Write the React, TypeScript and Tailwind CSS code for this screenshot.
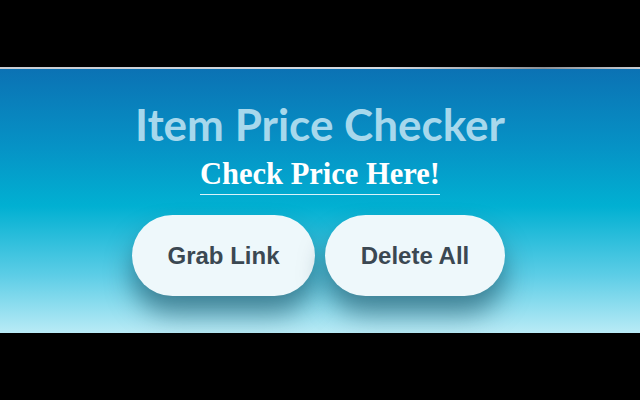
export default function App(): React.JSX.Element {
  return (
    <main className="flex h-[400px] w-[640px] flex-col bg-black">
      <div className="h-[67px] bg-black" />
      <div className="h-[2px] bg-[linear-gradient(90deg,#c9ccd2_0%,#d6dae0_60%,#8c9096_85%,#c9ccd2_100%)]" />
      <section className="flex h-[264px] flex-col items-center bg-[linear-gradient(180deg,#0b72b4_0%,#0693c6_30%,#01b0d2_52%,#5ccde6_78%,#b9ebf6_100%)] pt-[31px]">
        <h1 className="font-['Lato',sans-serif] text-[44px] font-bold leading-[48px] text-[#a7d8ec]">
          Item Price Checker
        </h1>
        <a className="mt-[8px] inline-block border-b border-[#d9f3fa] pb-[2px] font-['Liberation_Serif',serif] text-[30.5px] font-bold leading-[36px] text-white">
          Check Price Here!
        </a>
        <div className="mr-[3px] mt-[20px] flex gap-[10px]">
          <button
            type="button"
            className="h-[81px] w-[183px] rounded-full bg-[#eef8fb] font-['Liberation_Sans',sans-serif] text-[24px] font-bold text-[#3b4852] shadow-[0_18px_26px_rgba(0,45,65,0.5)]"
          >
            Grab Link
          </button>
          <button
            type="button"
            className="h-[81px] w-[180px] rounded-full bg-[#eef8fb] font-['Liberation_Sans',sans-serif] text-[24px] font-bold text-[#3b4852] shadow-[0_18px_26px_rgba(0,45,65,0.5)]"
          >
            Delete All
          </button>
        </div>
      </section>
    </main>
  );
}
